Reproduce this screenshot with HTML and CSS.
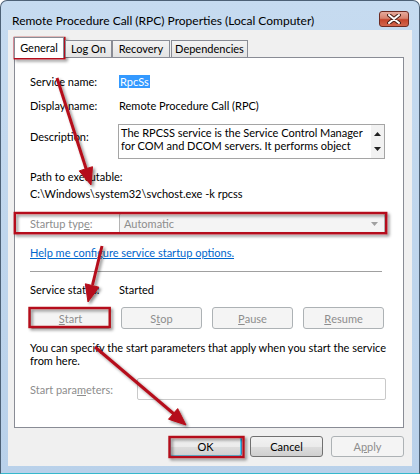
FILE: index.html
```html
<!DOCTYPE html>
<html>
<head>
<meta charset="utf-8">
<title>RPC Properties</title>
<link rel="stylesheet" href="styles.css">
</head>
<body>

<!-- Dialog window -->
<div class="window">
  <div class="titlebar">
    <span class="title">Remote Procedure Call (RPC) Properties (Local Computer)</span>
    <span class="closeBtn">
      <svg width="14" height="10" viewBox="0 0 14 10">
        <path d="M2 1 L12 9 M12 1 L2 9" stroke="#4a2018" stroke-width="4" stroke-linecap="round"/>
        <path d="M2 1 L12 9 M12 1 L2 9" stroke="#fff" stroke-width="2" stroke-linecap="round"/>
      </svg>
    </span>
  </div>

  <div class="client">
    <!-- Tabs -->
    <div class="tabs">
      <div class="tab selected tabGeneral">General</div>
      <div class="tab tabLogon">Log On</div>
      <div class="tab tabRecovery">Recovery</div>
      <div class="tab tabDeps">Dependencies</div>
    </div>

    <!-- General page -->
    <div class="panel">
      <div class="row first">
        <span class="label">Service name:</span>
        <span class="selText">RpcSs</span>
      </div>
      <div class="row">
        <span class="label">Display name:</span>
        <span>Remote Procedure Call (RPC)</span>
      </div>
      <div class="descRow">
        <span class="label descLabel">Description:</span>
        <div class="descBox">
          <div class="descText">The RPCSS service is the Service Control Manager<br>for COM and DCOM servers. It performs object</div>
          <div class="scrollbar">
            <svg width="7" height="4" viewBox="0 0 7 4"><path d="M0 4 L3.5 0 L7 4 Z" fill="#222"/></svg>
            <svg width="7" height="4" viewBox="0 0 7 4"><path d="M0 0 L3.5 4 L7 0 Z" fill="#222"/></svg>
          </div>
        </div>
      </div>
      <div class="line pathLabel">Path to executable:</div>
      <div class="line pathValue">C:\Windows\system32\svchost.exe -k rpcss</div>

      <div class="startupRow">
        <span class="label grey">Startup typ<u>e</u>:</span>
        <div class="combo">
          <span>Automatic</span>
          <svg width="7" height="4" viewBox="0 0 7 4"><path d="M0 0 L3.5 4 L7 0 Z" fill="#a0a0a0"/></svg>
        </div>
      </div>

      <div class="line linkLine"><a href="#" class="helpLink">Help me configure service startup options.</a></div>
      <div class="separator"></div>

      <div class="line statusRow">
        <span class="label">Service status:</span>
        <span>Started</span>
      </div>

      <div class="svcButtons">
        <span class="btn disabled"><u>S</u>tart</span>
        <span class="btn disabled">S<u>t</u>op</span>
        <span class="btn disabled"><u>P</u>ause</span>
        <span class="btn disabled"><u>R</u>esume</span>
      </div>

      <div class="para">You can specify the start parameters that apply when you start the service<br>from here.</div>

      <div class="paramRow">
        <span class="paramLabel grey">Start para<u>m</u>eters:</span>
        <div class="paramBox"></div>
      </div>
    </div>

    <!-- Dialog buttons -->
    <div class="footer">
      <span class="btn dlgBtn default">OK</span>
      <span class="btn dlgBtn">Cancel</span>
      <span class="btn dlgBtn disabled">A<u>p</u>ply</span>
    </div>
  </div>
</div>

<!-- Red annotations drawn over the screenshot -->
<svg class="marks" width="420" height="474" viewBox="0 0 420 474">
  <defs>
    <filter id="shadow" x="-20%" y="-20%" width="140%" height="140%">
      <feDropShadow dx="2" dy="2" stdDeviation="1.5" flood-color="#000" flood-opacity="0.45"/>
    </filter>
  </defs>
  <g fill="none" stroke="#b5101a" stroke-width="2.4" filter="url(#shadow)">
    <rect x="14.8" y="38" width="49.6" height="20.2"/>
    <rect x="14.8" y="213" width="371.4" height="20.2"/>
    <rect x="29.5" y="308" width="80.2" height="19"/>
    <rect x="169.5" y="437" width="74" height="20"/>
  </g>
  <g fill="#b5101a" stroke="#b5101a" stroke-width="3" filter="url(#shadow)">
    <line x1="57" y1="78" x2="86.5" y2="170"/>
    <polygon points="91,185 79.2,170.9 92.5,166.7" stroke-width="1"/>
    <line x1="102" y1="246" x2="92.5" y2="285"/>
    <polygon points="88,302 85.3,283.8 98.9,287.2" stroke-width="1"/>
    <line x1="95" y1="347" x2="174" y2="414"/>
    <polygon points="186,425 168.5,419.2 177.7,408.6" stroke-width="1"/>
  </g>
</svg>

</body>
</html>
```

FILE: styles.css
```css
html, body {
  margin: 0;
  padding: 0;
}

body {
  width: 420px;
  height: 474px;
  overflow: hidden;
  position: relative;
  background-color: #ffffff;
  font-family: Lato, "Liberation Sans", sans-serif;
  font-size: 11px;
  color: #000;
}

u {
  text-decoration: underline;
}

/* Window frame */
.window {
  box-sizing: border-box;
  width: 420px;
  height: 474px;
  border: 1px solid #4d6176;
  border-bottom-color: #35b8cc;
  border-radius: 7px 7px 0 0;
  background: linear-gradient(#c6dbf0, #b9d1ea);
  padding: 0 7px 7px 7px;
  display: flex;
  flex-direction: column;
}

.titlebar {
  height: 29px;
  display: flex;
  align-items: center;
  justify-content: space-between;
  padding-left: 4px;
  padding-right: 3px;
}

.title {
  font-size: 12px;
  color: #000;
  margin-top: 9px;
}

.closeBtn {
  box-sizing: border-box;
  width: 30px;
  height: 16px;
  margin-top: 7px;
  border: 1px solid #6d2b22;
  border-radius: 3px;
  background: linear-gradient(#e6aa9c 0%, #d7826e 45%, #c5452c 55%, #d2674f 100%);
  display: flex;
  align-items: center;
  justify-content: center;
}

/* Client area */
.client {
  flex: 1;
  background-color: #f0f0f0;
  padding: 7px 8px 0 6px;
}

.tabs {
  height: 20px;
  display: flex;
  align-items: flex-end;
  position: relative;
  z-index: 1;
}

.tab {
  box-sizing: border-box;
  height: 17px;
  border: 1px solid #898c95;
  border-bottom: none;
  background: linear-gradient(#f3f3f3, #e3e3e3);
  text-align: center;
  line-height: 16px;
}

.tab.selected {
  height: 21px;
  margin-bottom: -1px;
  background: #ffffff;
  line-height: 19px;
}

.tabGeneral { width: 50px; }
.tabLogon { width: 47px; margin-left: 1px; }
.tabRecovery { width: 58px; }
.tabDeps { width: 77px; margin-left: 1px; }

.panel {
  box-sizing: border-box;
  width: 390px;
  height: 371px;
  border: 1px solid #898c95;
  background-color: #ffffff;
  padding: 11px 0 0 15px;
}

.label {
  display: inline-block;
  width: 89px;
  flex-shrink: 0;
}

.grey {
  color: #8d8d8d;
}

.row {
  display: flex;
  align-items: center;
  height: 24px;
}

.selText {
  background-color: #3399ff;
  color: #ffffff;
  padding: 0 1px;
  line-height: 13px;
}

.descRow {
  display: flex;
  margin-top: 7px;
}

.descLabel {
  padding-top: 6px;
  line-height: 13px;
  margin-right: -1px;
}

.descBox {
  box-sizing: border-box;
  width: 267px;
  height: 35px;
  border: 1px solid #a5a5a5;
  display: flex;
  background: #fff;
}

.descText {
  flex: 1;
  padding: 1px 0 0 2px;
  line-height: 13px;
  white-space: nowrap;
  overflow: hidden;
}

.scrollbar {
  width: 13px;
  background-color: #f2f2f2;
  display: flex;
  flex-direction: column;
  align-items: center;
  justify-content: space-between;
  padding: 7px 0 7px 0;
}

.line {
  line-height: 13px;
}

.pathLabel {
  margin-top: 11px;
}

.pathValue {
  margin-top: 4px;
}

.startupRow {
  display: flex;
  align-items: center;
  margin-top: 13px;
}

.combo {
  box-sizing: border-box;
  width: 266px;
  height: 21px;
  border: 1px solid #b4b4b4;
  border-radius: 2px;
  background-color: #f4f4f4;
  color: #8d8d8d;
  display: flex;
  align-items: center;
  justify-content: space-between;
  padding: 0 6px 0 4px;
}

.linkLine {
  margin-top: 12px;
}

.helpLink {
  color: #0066cc;
  text-decoration: underline;
}

.separator {
  width: 352px;
  height: 1px;
  background-color: #a0a0a0;
  margin-top: 12px;
}

.statusRow {
  display: flex;
  margin-top: 11px;
}

.svcButtons {
  display: flex;
  gap: 10px;
  margin-top: 11px;
}

.btn {
  box-sizing: border-box;
  display: flex;
  align-items: center;
  justify-content: center;
  width: 81px;
  height: 22px;
  border: 1px solid #707070;
  border-radius: 3px;
  background: linear-gradient(#f2f2f2 0%, #ebebeb 50%, #dddddd 51%, #cfcfcf 100%);
  color: #000;
}

.btn.disabled {
  border-color: #adb2b5;
  background: #f4f4f4;
  color: #8d8d8d;
}

.para {
  margin-top: 12px;
  line-height: 13px;
}

.paramRow {
  display: flex;
  align-items: center;
  margin-top: 11px;
}

.paramLabel {
  width: 107px;
}

.paramBox {
  box-sizing: border-box;
  width: 249px;
  height: 22px;
  border: 1px solid #c9c9c9;
  border-radius: 2px;
  background: #fff;
}

/* Bottom buttons */
.footer {
  display: flex;
  justify-content: flex-end;
  gap: 8px;
  margin-top: 8px;
}

.dlgBtn {
  width: 73px;
  height: 21px;
}

.dlgBtn.default {
  border-color: #3c7fb1;
  box-shadow: inset 0 0 0 1px #48d0f5;
}

/* Annotation overlay */
.marks {
  position: absolute;
  left: 0;
  top: 0;
}
```
